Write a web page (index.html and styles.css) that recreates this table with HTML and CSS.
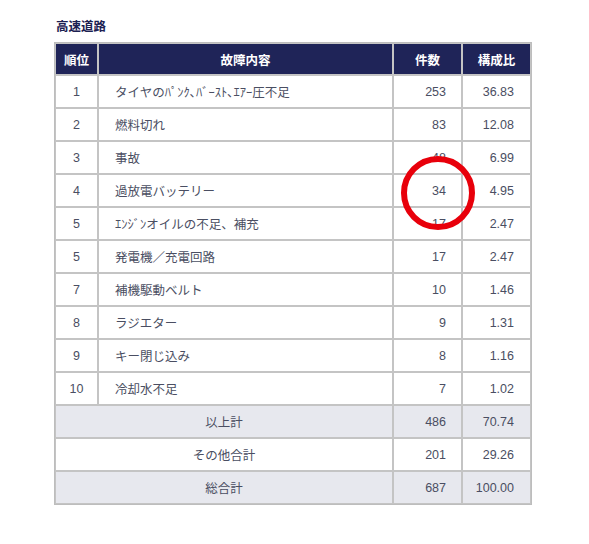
FILE: index.html
```html
<!DOCTYPE html>
<html lang="ja">
<head>
<meta charset="utf-8">
<title>高速道路</title>
<link rel="stylesheet" href="styles.css">
</head>
<body>
<div class="wrap">
  <h2 class="title">高速道路</h2>
  <div class="table-box">
    <table class="stats">
      <thead>
        <tr>
          <th class="c-rank">順位</th>
          <th class="c-desc">故障内容</th>
          <th class="c-num">件数</th>
          <th class="c-pct">構成比</th>
        </tr>
      </thead>
      <tbody>
        <tr><td class="rank">1</td><td class="desc">タイヤのﾊﾟﾝｸ､ﾊﾞｰｽﾄ､ｴｱｰ圧不足</td><td class="num">253</td><td class="pct">36.83</td></tr>
        <tr><td class="rank">2</td><td class="desc">燃料切れ</td><td class="num">83</td><td class="pct">12.08</td></tr>
        <tr><td class="rank">3</td><td class="desc">事故</td><td class="num">48</td><td class="pct">6.99</td></tr>
        <tr><td class="rank">4</td><td class="desc">過放電バッテリー</td><td class="num">34</td><td class="pct">4.95</td></tr>
        <tr><td class="rank">5</td><td class="desc">ｴﾝｼﾞﾝオイルの不足、補充</td><td class="num">17</td><td class="pct">2.47</td></tr>
        <tr><td class="rank">5</td><td class="desc">発電機／充電回路</td><td class="num">17</td><td class="pct">2.47</td></tr>
        <tr><td class="rank">7</td><td class="desc">補機駆動ベルト</td><td class="num">10</td><td class="pct">1.46</td></tr>
        <tr><td class="rank">8</td><td class="desc">ラジエター</td><td class="num">9</td><td class="pct">1.31</td></tr>
        <tr><td class="rank">9</td><td class="desc">キー閉じ込み</td><td class="num">8</td><td class="pct">1.16</td></tr>
        <tr><td class="rank">10</td><td class="desc">冷却水不足</td><td class="num">7</td><td class="pct">1.02</td></tr>
        <tr class="sum"><td class="label" colspan="2">以上計</td><td class="num">486</td><td class="pct">70.74</td></tr>
        <tr><td class="label" colspan="2">その他合計</td><td class="num">201</td><td class="pct">29.26</td></tr>
        <tr class="sum"><td class="label" colspan="2">総合計</td><td class="num">687</td><td class="pct">100.00</td></tr>
      </tbody>
    </table>
    <svg class="mark" width="80" height="80" viewBox="0 0 80 80" aria-hidden="true">
      <circle cx="40" cy="40" r="34" fill="none" stroke="#e8000b" stroke-width="6"/>
    </svg>
  </div>
</div>
</body>
</html>
```
FILE: styles.css
```css
html, body {
  margin: 0;
  padding: 0;
  background: #ffffff;
}

body {
  font-family: "Noto Sans CJK JP", "Noto Sans", sans-serif;
  color: #4a4e62;
}

.wrap {
  padding: 17px 0 0 54px;
}

.title {
  margin: 0 0 7px 2px;
  font-size: 12.5px;
  line-height: 18px;
  font-weight: 700;
  color: #1c2152;
}

.table-box {
  position: relative;
  width: 477px;
}

.stats {
  border-collapse: separate;
  border-spacing: 0;
  border: 1px solid #bdbdbd;
  width: 477px;
  table-layout: fixed;
}

.stats th,
.stats td {
  border: 1px solid #c4c4c4;
  padding: 0;
  box-sizing: border-box;
}

.stats th {
  background: #1f2458;
  color: #ffffff;
  font-weight: 700;
  font-size: 12.5px;
  height: 32px;
  text-align: center;
}

.c-rank { width: 43px; }
.c-desc { width: 295px; }
.c-num  { width: 69px; }
.c-pct  { width: 69px; }

.stats td {
  height: 33px;
  font-size: 12.5px;
  vertical-align: middle;
}

.stats td.rank {
  text-align: center;
  font-family: "Liberation Sans", "Noto Sans CJK JP", sans-serif;
  font-size: 12.5px;
}

.stats td.desc {
  text-align: left;
  padding-left: 16px;
}

.stats td.num,
.stats td.pct {
  text-align: right;
  font-family: "Liberation Sans", "Noto Sans CJK JP", sans-serif;
  font-size: 12.5px;
}

.stats td.num { padding-right: 15px; }
.stats td.pct { padding-right: 16px; }

.stats td.label {
  text-align: center;
}

.stats tr.sum td {
  background: #e7e8ee;
}

.mark {
  position: absolute;
  left: 344px;
  top: 111px;
}
```
